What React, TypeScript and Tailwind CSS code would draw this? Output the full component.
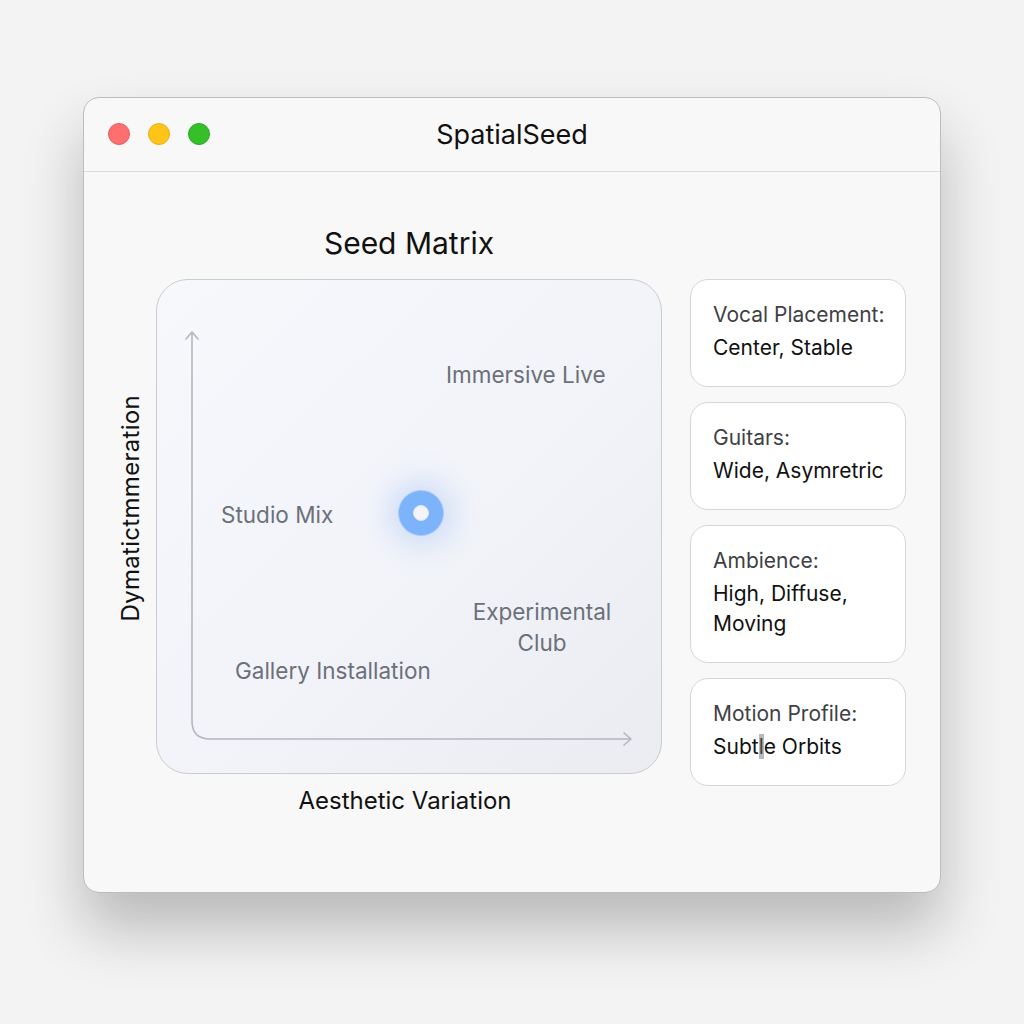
import React from "react";

const font = { fontFamily: 'Inter, "Noto Sans", "Liberation Sans", sans-serif' };

function Card({ label, value }: { label: string; value: React.ReactNode }) {
  return (
    <div className="rounded-[18px] border border-[#d6d6d6] bg-white pl-[22px] pr-[6px] pt-[20px] pb-[23px] text-[21px] leading-[30px] whitespace-nowrap">
      <div className="text-[#3f3f46]">{label}</div>
      <div className="text-[#111111] mt-[3px]">{value}</div>
    </div>
  );
}

export default function App() {
  return (
    <div
      className="w-[1024px] h-[1024px] bg-[#f3f3f3] flex flex-col items-start pt-[97px] pl-[83px]"
      style={font}
    >
      <div className="w-[858px] h-[796px] rounded-[16px] border border-[#bdbdbd] bg-[#f8f8f8] shadow-[0_36px_60px_rgba(0,0,0,0.24)] flex flex-col overflow-hidden">
        {/* Title bar */}
        <div className="relative h-[74px] shrink-0 border-b border-[#dcdcdc] flex items-center justify-center">
          <div className="absolute left-[24px] top-[25px] flex gap-[18px]">
            <div className="w-[22px] h-[22px] rounded-full bg-[#fe7070] border border-[#ea5a5a]" />
            <div className="w-[22px] h-[22px] rounded-full bg-[#fec419] border border-[#e9b10c]" />
            <div className="w-[22px] h-[22px] rounded-full bg-[#35c02a] border border-[#25a91c]" />
          </div>
          <div className="text-[27px] text-[#111] pt-[1px]">SpatialSeed</div>
        </div>

        {/* Body */}
        <div className="flex items-start pl-[22px] pt-[51px] gap-[28px]">
          <div className="flex flex-col">
            <div className="h-[40px] ml-[50px] w-[506px] text-center text-[30px] leading-[40px] text-[#111]">
              Seed Matrix
            </div>
            <div className="flex mt-[16px]">
              <div className="w-[50px] flex items-center justify-center pb-[36px]">
                <div className="[writing-mode:vertical-rl] rotate-180 text-[24px] tracking-[0.3px] text-[#111] whitespace-nowrap">
                  Dymatictmmeration
                </div>
              </div>
              <div className="relative w-[506px] h-[495px] rounded-[32px] border border-[#c9ccd3] bg-gradient-to-br from-[#f6f8fc] via-[#f2f4f9] to-[#eaecf2]">
                <svg className="absolute left-0 top-0" width="506" height="495" viewBox="0 0 506 495" fill="none">
                  <path d="M35 52 V441 Q35 459 53 459 H474" stroke="#b3b7be" strokeWidth="1.6" />
                  <path d="M29 59 L35 52 L41 59" stroke="#b3b7be" strokeWidth="1.6" strokeLinejoin="round" strokeLinecap="round" />
                  <path d="M467 453 L474 459 L467 465" stroke="#b3b7be" strokeWidth="1.6" strokeLinejoin="round" strokeLinecap="round" />
                </svg>
                <div className="absolute left-[289px] top-[80px] text-[22.5px] leading-[30px] text-[#6c707a] whitespace-nowrap">
                  Immersive Live
                </div>
                <div className="absolute left-[64px] top-[220px] text-[22.5px] leading-[30px] text-[#6c707a] whitespace-nowrap">
                  Studio Mix
                </div>
                <div className="absolute left-[300px] top-[316px] w-[170px] text-center text-[22.5px] leading-[31px] text-[#6c707a]">
                  Experimental
                  <br />
                  Club
                </div>
                <div className="absolute left-[78px] top-[376px] text-[22.5px] leading-[30px] text-[#6c707a] whitespace-nowrap">
                  Gallery Installation
                </div>
                <div className="absolute left-[241px] top-[210px] w-[46px] h-[46px] rounded-full bg-[#7db3fa] border border-[#a9cbfb] shadow-[0_0_28px_10px_rgba(120,165,250,0.28)] flex items-center justify-center">
                  <div className="w-[16px] h-[16px] rounded-full bg-[#f3f5fa] border border-[#dfe7f5]" />
                </div>
              </div>
            </div>
            <div className="ml-[46px] w-[506px] text-center text-[24px] leading-[30px] text-[#111] mt-[12px]">
              Aesthetic Variation
            </div>
          </div>

          <div className="w-[216px] flex flex-col gap-[15px] mt-[56px]">
            <Card label="Vocal Placement:" value="Center, Stable" />
            <Card label="Guitars:" value="Wide, Asymretric" />
            <Card
              label="Ambience:"
              value={
                <>
                  High, Diffuse,
                  <br />
                  Moving
                </>
              }
            />
            <Card
              label="Motion Profile:"
              value={
                <>
                  Subt<span className="bg-[#b9b9b9] text-[#444]">l</span>e Orbits
                </>
              }
            />
          </div>
        </div>
      </div>
    </div>
  );
}
